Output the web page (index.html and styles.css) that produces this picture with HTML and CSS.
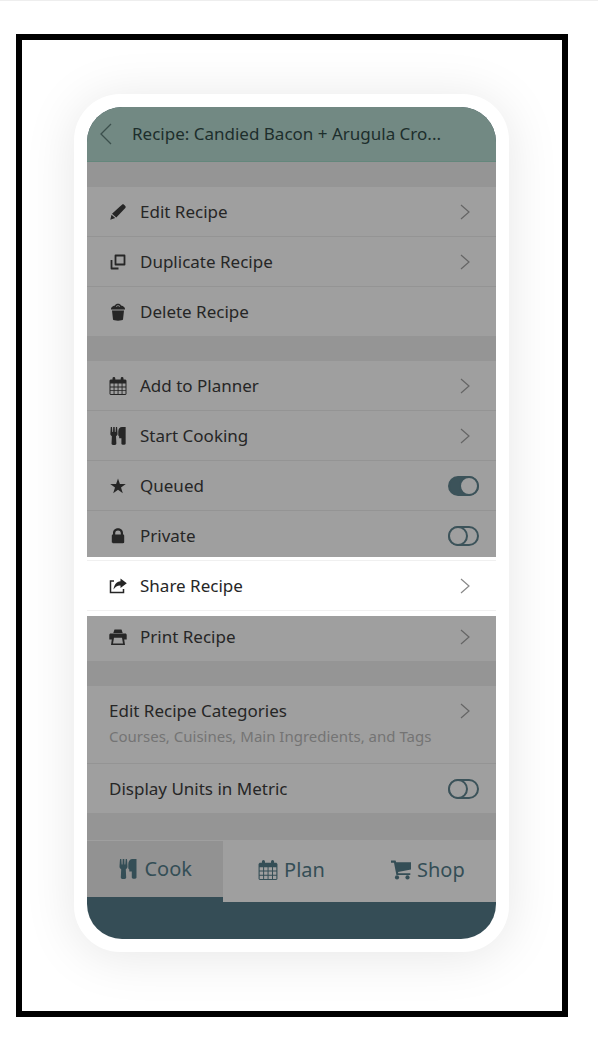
FILE: index.html
```html
<!DOCTYPE html>
<html lang="en">
<head>
<meta charset="utf-8">
<meta name="viewport" content="width=device-width, initial-scale=1">
<title>Recipe options</title>
<link rel="stylesheet" href="styles.css">
</head>
<body>
<svg class="sprite" aria-hidden="true">
  <symbol id="chevron" viewBox="0 0 10 16"><path d="M1 1l8 7-8 7" fill="none" stroke="currentColor" stroke-width="1.2"/></symbol>
  <symbol id="calendar" viewBox="0 0 18 18"><path fill-rule="evenodd" d="M1.500 2.500h2v-1a1.400 1.400 0 0 1 2.800 0v1h5.400v-1a1.400 1.400 0 0 1 2.800 0v1h2l1 1V17l-1 1h-15l-1-1V3.500zM1.500 6.500v3h3.100v-3zm4 0v3h3.100v-3zm4 0v3h3.100v-3zm4 0v3h3v-3zM1.500 10.400v2.800h3.100v-2.800zm4 0v2.800h3.100v-2.800zm4 0v2.800h3.100v-2.800zm4 0v2.800h3v-2.800zM1.500 14.100V17h3.100v-2.900zm4 0V17h3.100v-2.900zm4 0V17h3.100v-2.900zm4 0V17h3v-2.900z"/></symbol>
  <symbol id="cutlery" viewBox="0 0 18 20"><path d="M1 0h1.300l.4 5.500h.8L3.700 0h1.600l.2 5.500h.8L6.700 0H8l.5 7.500c0 1.500-.9 2.300-1.700 2.800l.4 8.200c0 2-5.400 2-5.400 0l.4-8.200C1.400 9.800.5 9 .5 7.500zM17.500 0v18.500c0 1.700-4.700 1.700-4.700 0v-6h-2.500v-2l-1-1V5C9.300 2 11 0 13.500 0z"/></symbol>
  <symbol id="cart" viewBox="0 0 20 20"><path d="M0 .5h4.500l.7 1.800H20V9.500L7 12l.3 1.300h12V15H5.400L3 2.800H0z"/><circle cx="6" cy="17.400" r="2.100"/><circle cx="16.500" cy="17.400" r="2.100"/></symbol>
</svg>
<main class="frame">
  <div class="phone">
    <div class="screen">
      <header class="header">
        <button class="back" type="button" aria-label="Back"><svg viewBox="0 0 12 22"><path d="M11 1L1 11l10 10" fill="none" stroke="currentColor" stroke-width="1.300"/></svg></button>
        <h1 class="title">Recipe: Candied Bacon + Arugula Cro...</h1>
      </header>

      <section class="group">
        <a class="row" href="#edit">
          <svg class="icon" viewBox="0 0 18 18"><path d="M11.500 3l1.500-1.300c.6-.5 1.500-.5 2 0l1.300 1.300c.5.500.5 1.400 0 2L7.300 14.500 3 10.700zM2.500 11.700l3.700 3.400-4.900 1.600z"/></svg>
          <span class="label">Edit Recipe</span><svg class="chevron"><use href="#chevron"/></svg></a>
        <a class="row" href="#duplicate">
          <svg class="icon" viewBox="0 0 18 18"><path d="M6.500 2.500h9v9h-9zM2.500 7v8.500h7" fill="none" stroke="currentColor" stroke-width="1.800" stroke-linejoin="round"/></svg>
          <span class="label">Duplicate Recipe</span><svg class="chevron"><use href="#chevron"/></svg></a>
        <button class="row" type="button">
          <svg class="icon" viewBox="0 0 18 18"><path d="M3 7.500h12l-1 9c-.1 1.500-9.900 1.500-10 0zM2 6.500C1.700 4.500 3.500 3 6 2.500 6.500 0 11.500 0 12 2.500c2.500.500 4.300 2 4 4z"/><path d="M7 3.500q2-2 4 0" fill="none" stroke="#9f9f9f" stroke-width=".8"/></svg>
          <span class="label">Delete Recipe</span></button>
      </section>

      <section class="group">
        <a class="row" href="#planner"><svg class="icon"><use href="#calendar"/></svg>
          <span class="label">Add to Planner</span><svg class="chevron"><use href="#chevron"/></svg></a>
        <a class="row" href="#cook"><svg class="icon"><use href="#cutlery"/></svg>
          <span class="label">Start Cooking</span><svg class="chevron"><use href="#chevron"/></svg></a>
        <label class="row" for="queued">
          <svg class="icon" viewBox="0 0 18 18"><path d="M9 1.500l1.900 5.600h5.900L12 10.500l1.800 5.700L9 12.700l-4.800 3.500L6 10.500 1.200 7.100h5.900z"/></svg>
          <span class="label">Queued</span><input class="toggle" id="queued" type="checkbox" role="switch" checked></label>
        <label class="row" for="private">
          <svg class="icon" viewBox="0 0 18 18"><path fill-rule="evenodd" d="M4 7.500V6C4-.3 14-.3 14 6v1.500c.8 0 1.200.4 1.200 1.200V15c0 .8-.4 1.200-1.200 1.200H4c-.8 0-1.200-.4-1.200-1.200V8.700c0-.8.4-1.200 1.200-1.200zm2.200 0h5.600V6c0-3.300-5.600-3.300-5.600 0z"/></svg>
          <span class="label">Private</span><input class="toggle" id="private" type="checkbox" role="switch"></label>
        <a class="row spotlight" href="#share">
          <svg class="icon" viewBox="0 0 18 18"><path d="M5 4H1.500v11.500h13V12" fill="none" stroke="currentColor" stroke-width="1.500"/><path d="M11.500 1.500l6.300 4.800-6.300 4.800V8.500C8.500 8.300 6.500 9.500 4.500 12.500 5 8 7.500 4.500 11.500 4.200z"/></svg>
          <span class="label">Share Recipe</span><svg class="chevron"><use href="#chevron"/></svg></a>
        <a class="row" href="#print">
          <svg class="icon" viewBox="0 0 18 18"><path fill-rule="evenodd" d="M5.500 1.500h7l1.200 3.500H4.300zM2 5.500h14c1.300 0 1.700.6 1.700 1.500v4.500h-2.500l.8 5.500H2l.8-5.500H.3V7c0-.9.4-1.500 1.700-1.500zm3 4.200L4 15.500h10l-1-5.800z"/></svg>
          <span class="label">Print Recipe</span><svg class="chevron"><use href="#chevron"/></svg></a>
      </section>

      <section class="group">
        <a class="row tall" href="#categories">
          <span class="label">Edit Recipe Categories<small class="hint">Courses, Cuisines, Main Ingredients, and Tags</small></span>
          <svg class="chevron"><use href="#chevron"/></svg></a>
        <label class="row" for="metric"><span class="label">Display Units in Metric</span><input class="toggle" id="metric" type="checkbox" role="switch"></label>
      </section>

      <nav class="tabs" aria-label="Main">
        <a class="tab active" href="#cook-tab" aria-current="page"><svg class="tab-icon"><use href="#cutlery"/></svg>Cook</a>
        <a class="tab" href="#plan-tab"><svg class="tab-icon"><use href="#calendar"/></svg>Plan</a>
        <a class="tab" href="#shop-tab"><svg class="tab-icon"><use href="#cart"/></svg>Shop</a>
      </nav>
    </div>
  </div>
</main>
</body>
</html>
```
FILE: styles.css
```css
*, *::before { box-sizing: border-box; }

body {
  margin: 0;
  padding: 33px 30px 28px 16px;
  border-top: 1px solid #eeeeee;
  background: #fff;
  color: #262626;
  font: 17px/24px "Noto Sans", "Open Sans", sans-serif;
}

svg { display: block; fill: currentColor; }
.sprite { position: absolute; width: 0; height: 0; }
a { color: inherit; text-decoration: none; }

.frame {
  padding: 54px 53px 59px 52px;
  border: 6px solid #000;
  overflow: hidden;
}

.phone {
  padding: 13px;
  border-radius: 46px;
  background: #fff;
  box-shadow: 0 4px 52px rgba(0, 0, 0, 0.1);
}

.screen {
  padding-bottom: 37px;
  border-radius: 35px;
  background: #354d56;
  overflow: hidden;
}

.header {
  display: flex;
  align-items: center;
  height: 55px;
  padding: 0 12px 0 13px;
  background: #728983;
  border-bottom: 1px solid #64877c;
  color: #1d2e2c;
}

.back {
  width: 32px;
  padding: 0;
  border: 0;
  background: none;
  color: #3b4f4c;
}
.back svg { width: 12px; height: 22px; }

.title {
  flex: 1;
  margin: 0;
  font-size: 17px;
  font-weight: 400;
  white-space: nowrap;
}

.group {
  border-top: 25px solid #959595;
  background: #9f9f9f;
}

.row {
  display: flex;
  align-items: center;
  width: 100%;
  height: 50px;
  padding: 0 17px 0 22px;
  border: 0;
  background: none;
  color: inherit;
  font: inherit;
  text-align: left;
}
.row:first-child { height: 49px; }
.row + .row { border-top: 1px solid #949494; }

.icon {
  flex: none;
  width: 18px;
  height: 18px;
  margin-right: 13px;
}

.label { flex: 1; white-space: nowrap; }

.chevron {
  width: 10px;
  height: 16px;
  margin-right: 9px;
  color: #656565;
}

.hint {
  display: block;
  font-size: 15px;
  line-height: 26px;
  color: #747474;
}

.row.tall {
  align-items: flex-start;
  height: 77px;
  padding-top: 13px;
}
.tall .chevron { margin-top: 4px; }

.row.spotlight {
  position: relative;
  height: 51px;
  background: #fff;
  border-top-color: #f0f0f0;
  border-bottom: 1px solid #f0f0f0;
  box-shadow: 0 1px 0 4px #fff;
}
.row.spotlight + .row { border-color: transparent; }
.spotlight .chevron { color: #888; }

.toggle {
  appearance: none;
  width: 31px;
  height: 20px;
  margin: 0;
  border: 2px solid #3c535a;
  border-radius: 10px;
}
.toggle::before {
  content: "";
  display: block;
  width: 20px;
  height: 20px;
  margin: -2px;
  border: 2px solid #3c535a;
  border-radius: 50%;
  background: #9f9f9f;
}
.toggle:checked { background: #3c535a; }
.toggle:checked::before { margin-left: 9px; }

.tabs {
  display: grid;
  grid-template-columns: repeat(3, 1fr);
  height: 89px;
  border-top: 27px solid #959595;
  color: #344e56;
  font-size: 20px;
}

.tab {
  display: flex;
  align-items: center;
  justify-content: center;
  gap: 6px;
  padding-bottom: 2px;
  background: #9f9f9f;
}
.tab.active {
  padding-bottom: 0;
  border-top: 1px solid #9f9f9f;
  border-bottom: 5px solid #354d56;
  background: #929292;
}
.tab-icon { width: 20px; height: 20px; }
```
